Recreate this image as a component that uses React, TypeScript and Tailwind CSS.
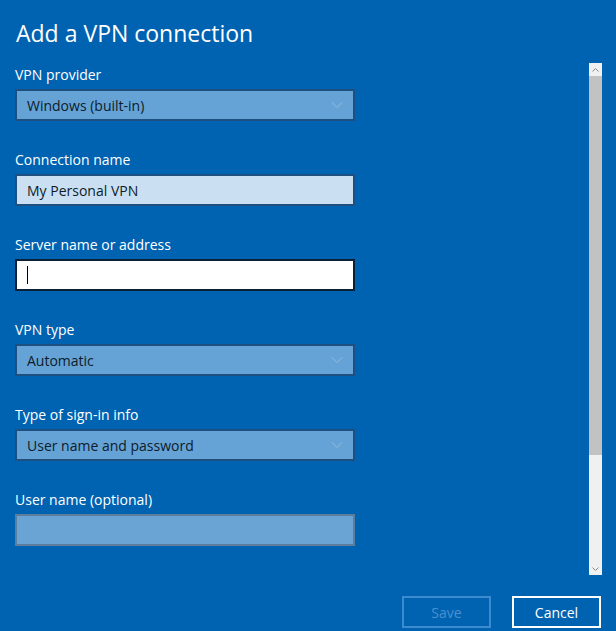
import { ChevronDown } from 'lucide-react';

const font = { fontFamily: '"Open Sans", "Noto Sans", sans-serif' };

function Label({ children }: { children: React.ReactNode }) {
  return <div className="text-[14px] leading-[20px] text-white h-[20px]">{children}</div>;
}

function Select({ value }: { value: string }) {
  return (
    <div className="mt-[4px] flex h-[32px] w-[340px] items-center justify-between border-2 border-[#1d4f80] bg-[#65a3d6] pl-[10px] pr-[6px]">
      <span className="text-[14px] text-[#0d1b2a]">{value}</span>
      <ChevronDown size={20} strokeWidth={1} className="text-[#9cc0e0]" />
    </div>
  );
}

export default function App() {
  return (
    <div className="relative h-[631px] w-[616px] overflow-hidden bg-[#0063b1]" style={font}>
      <div className="flex flex-col pl-[15px] pt-[18px]">
        <h1 className="pl-[1px] text-[23px] leading-[30px] text-white">Add a VPN connection</h1>

        <div className="mt-[17px] flex flex-col gap-[29px]">
          <div>
            <Label>VPN provider</Label>
            <Select value="Windows (built-in)" />
          </div>

          <div>
            <Label>Connection name</Label>
            <div className="mt-[4px] flex h-[32px] w-[340px] items-center border-2 border-[#1d4f80] bg-[#cae0f2] pl-[10px] text-[14px] text-[#0d1b2a]">
              My Personal VPN
            </div>
          </div>

          <div>
            <Label>Server name or address</Label>
            <div className="mt-[4px] flex h-[32px] w-[340px] items-center border-2 border-[#0b2236] bg-white pl-[10px]">
              <span className="h-[18px] w-[1px] bg-black" />
            </div>
          </div>

          <div>
            <Label>VPN type</Label>
            <Select value="Automatic" />
          </div>

          <div>
            <Label>Type of sign-in info</Label>
            <Select value="User name and password" />
          </div>

          <div>
            <Label>User name (optional)</Label>
            <div className="mt-[4px] h-[32px] w-[340px] border-2 border-[#5d7d9c] bg-[#6aa4d4]" />
          </div>
        </div>
      </div>

      {/* scrollbar */}
      <div className="absolute left-[589px] top-[63px] flex h-[512px] w-[13px] flex-col">
        <div className="flex h-[13px] items-center justify-center bg-[#f0f0f0]">
          <svg width="7" height="4" viewBox="0 0 7 4"><path d="M0.5 3.5 L3.5 0.5 L6.5 3.5" stroke="#8a8a8a" fill="none" /></svg>
        </div>
        <div className="h-[379px] bg-[#c2c2c2]" />
        <div className="flex-1 bg-[#f0f0f0]" />
        <div className="flex h-[13px] items-center justify-center bg-[#f0f0f0]">
          <svg width="7" height="4" viewBox="0 0 7 4"><path d="M0.5 0.5 L3.5 3.5 L6.5 0.5" stroke="#8a8a8a" fill="none" /></svg>
        </div>
      </div>

      {/* buttons */}
      <div className="absolute left-[402px] top-[596px] flex gap-[21px]">
        <button className="h-[32px] w-[89px] border-2 border-[#3c8ad0] text-[14px] text-[#4b90cf]">Save</button>
        <button className="h-[32px] w-[89px] border-2 border-white text-[14px] text-white">Cancel</button>
      </div>
    </div>
  );
}
